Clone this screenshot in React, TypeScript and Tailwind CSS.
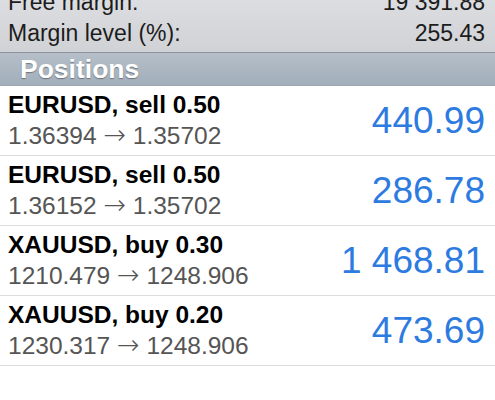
const summary = [
  { label: "Free margin:", value: "19 391.88" },
  { label: "Margin level (%):", value: "255.43" },
];

const positions = [
  { title: "EURUSD, sell 0.50", open: "1.36394", current: "1.35702", profit: "440.99" },
  { title: "EURUSD, sell 0.50", open: "1.36152", current: "1.35702", profit: "286.78" },
  { title: "XAUUSD, buy 0.30", open: "1210.479", current: "1248.906", profit: "1 468.81" },
  { title: "XAUUSD, buy 0.20", open: "1230.317", current: "1248.906", profit: "473.69" },
];

export default function App() {
  return (
    <div className="w-[495px] h-[400px] bg-white overflow-hidden font-['Liberation_Sans',Arial,sans-serif]">
      {/* Account summary */}
      <div className="h-[53px] overflow-hidden flex flex-col justify-end pb-[3px] bg-gradient-to-b from-[#dcdde1] to-[#d0d2d6] border-b border-[#8d9298]">
        {summary.map((row) => (
          <div key={row.label} className="flex justify-between px-2 text-[23px] leading-[31px] text-[#1c1c1c]">
            <span>{row.label}</span>
            <span className="pr-[2px]">{row.value}</span>
          </div>
        ))}
      </div>

      {/* Section header */}
      <div className="h-[33px] bg-gradient-to-b from-[#b5bfc9] to-[#a2aeba] px-5 border-b border-[#9aa5b0]">
        <span className="text-[26.5px] leading-[32px] font-bold text-white [text-shadow:0_1px_1px_rgba(0,0,0,0.35)]">
          Positions
        </span>
      </div>

      {/* Positions list */}
      {positions.map((p, i) => (
        <div key={i} className="h-[70px] flex items-center justify-between border-b border-[#dcdcdc] pl-2 pr-[10px]">
          <div className="self-start pt-[3px]">
            <div className="text-[24.5px] leading-[31px] font-bold text-black">{p.title}</div>
            <div className="text-[24.5px] leading-[32px] text-[#555555] whitespace-nowrap">
              {p.open}{" "}
              <span className="font-['DejaVu_Sans',sans-serif] text-[27px] leading-none font-light">→</span>{" "}
              {p.current}
            </div>
          </div>
          <div className="text-[37px] text-[#2d7be0]">{p.profit}</div>
        </div>
      ))}
    </div>
  );
}
